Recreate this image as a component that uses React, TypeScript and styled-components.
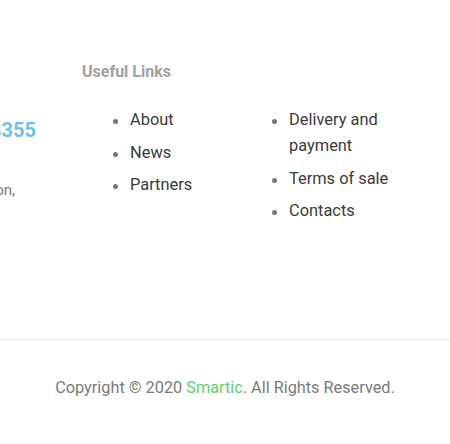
import React from "react";
import styled, { createGlobalStyle } from "styled-components";

const GlobalStyle = createGlobalStyle`
  html, body {
    margin: 0;
    padding: 0;
    background: #ffffff;
    overflow: hidden;
  }
  body {
    font-family: Roboto, "Liberation Sans", Arial, sans-serif;
  }
  * { box-sizing: border-box; }
`;

const Footer = styled.footer`
  width: 450px;
  overflow: hidden;
`;

const Top = styled.div`
  display: flex;
  align-items: flex-start;
  height: 339px;
  padding-top: 60px;
`;

const ContactCol = styled.div`
  flex: none;
  width: 82px;
  display: flex;
  flex-direction: column;
  align-items: flex-end;
`;

const Phone = styled.div`
  margin-top: 55px;
  margin-right: 46px;
  font-size: 20px;
  line-height: 30px;
  font-weight: 700;
  color: #6ec1e4;
  white-space: nowrap;
`;

const Address = styled.div`
  margin-top: 33px;
  margin-right: 67px;
  font-size: 15px;
  line-height: 24px;
  color: #7a7a7a;
  white-space: nowrap;
`;

const LinksCol = styled.div`
  flex: none;
  width: 159px;
  display: flex;
  flex-direction: column;
`;

const Heading = styled.h4`
  margin: 0;
  height: 24px;
  font-size: 16px;
  line-height: 24px;
  font-weight: 700;
  color: #a1a1a1;
`;

const List = styled.ul`
  list-style: none;
  margin: 23px 0 0;
  padding: 0 0 0 31px;
  display: flex;
  flex-direction: column;
  gap: 6.5px;
`;

const Item = styled.li`
  display: flex;
  align-items: flex-start;
  gap: 12px;
  font-size: 16.4px;
  line-height: 26px;
  color: #3a3a3a;

  &::before {
    content: "";
    flex: none;
    width: 5px;
    height: 5px;
    margin-top: 12px;
    border-radius: 50%;
    background: #777777;
  }
`;

const Bottom = styled.div`
  border-top: 1px solid #e8e8e8;
  padding: 36px 0 44px;
  text-align: center;
`;

const Copyright = styled.p`
  margin: 0;
  font-size: 16.3px;
  line-height: 24px;
  color: #7a7a7a;
`;

const Brand = styled.span`
  color: #61ce70;
`;

export default function App() {
  return (
    <>
      <GlobalStyle />
      <Footer>
        <Top>
          <ContactCol>
            <Phone>+1 (234) 567 8355</Phone>
            <Address>1234 Main Street, Washington,</Address>
          </ContactCol>
          <LinksCol>
            <Heading>Useful Links</Heading>
            <List>
              <Item>About</Item>
              <Item>News</Item>
              <Item>Partners</Item>
            </List>
          </LinksCol>
          <LinksCol>
            <Heading />
            <List>
              <Item>Delivery and payment</Item>
              <Item>Terms of sale</Item>
              <Item>Contacts</Item>
            </List>
          </LinksCol>
        </Top>
        <Bottom>
          <Copyright>
            Copyright © 2020 <Brand>Smartic</Brand>. All Rights Reserved.
          </Copyright>
        </Bottom>
      </Footer>
    </>
  );
}
